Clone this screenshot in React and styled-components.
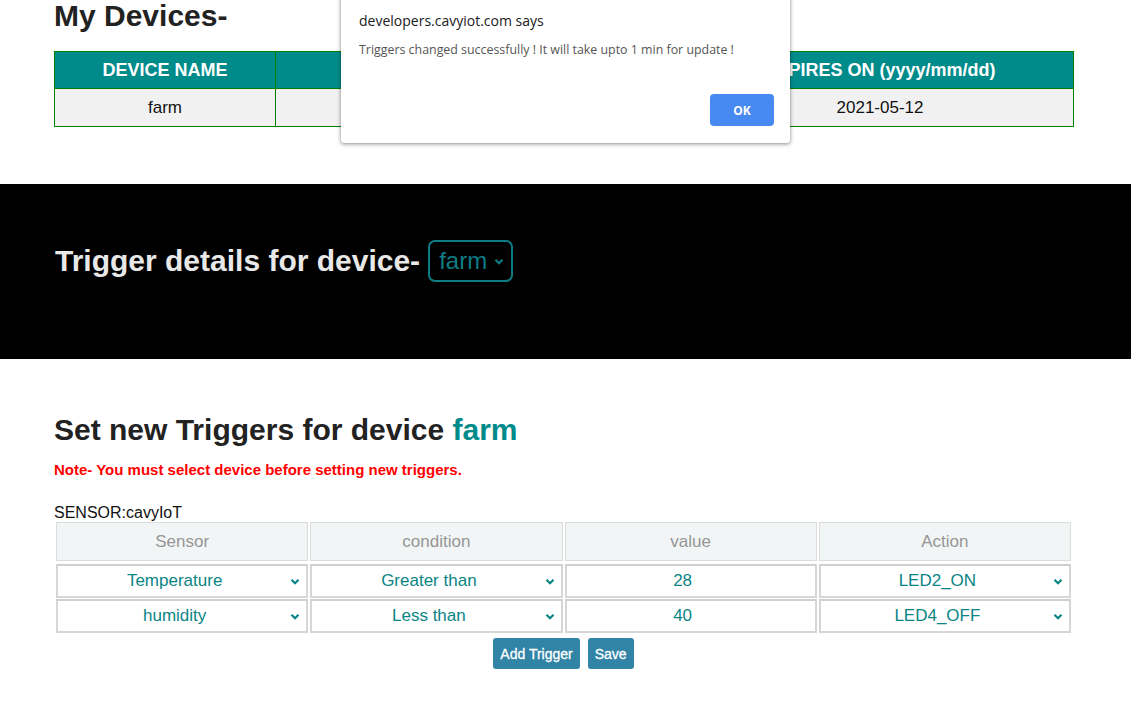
import React from "react";
import styled, { createGlobalStyle } from "styled-components";

const GlobalStyle = createGlobalStyle`
   html, body {
      margin: 0;
      padding: 0;
      background: #ffffff;
      font-family: "Liberation Sans", Arial, sans-serif;
   }
   * {
      box-sizing: border-box;
   }
`;

const Page = styled("div")`
   position: relative;
   width: 1131px;
   min-height: 726px;
   overflow: hidden;
`;

const Section = styled("section")`
   padding: ${(p) => p.pad || "0 57px 0 54px"};
   margin-top: ${(p) => p.top || 0}px;
   background: ${(p) => (p.dark ? "#000000" : "transparent")};
`;

const Heading = styled("h1")`
   margin: 0;
   font-size: 30px;
   line-height: 32px;
   font-weight: bold;
   color: ${(p) => p.color || "#222222"};
`;

const HeadingRow = styled(Heading)`
   display: flex;
   align-items: center;
   gap: 8px;
`;

const Teal = styled("span")`
   color: #008b8b;
`;

const DeviceTable = styled("table")`
   width: 100%;
   margin-top: 19px;
   border-collapse: collapse;
   border: 1px solid #008000;
   th,
   td {
      border: 1px solid #008000;
      text-align: center;
      height: 38px;
      padding: 0;
   }
   th {
      height: 37px;
      background: #008b8b;
      color: #ffffff;
      font-size: 18px;
      font-weight: bold;
   }
   td {
      background: #f1f1f1;
      color: #111111;
      font-size: 17px;
   }
`;

const DeviceSelect = styled("div")`
   display: flex;
   align-items: center;
   gap: 7px;
   height: 42px;
   padding: 0 7px 0 9px;
   border: 2px solid #0e7c84;
   border-radius: 7px;
   color: #0e7c84;
   font-size: 24px;
   font-weight: normal;
`;

const Note = styled("p")`
   margin: 15px 0 0;
   color: #ff0000;
   font-size: 15px;
   font-weight: bold;
`;

const SensorLabel = styled("div")`
   margin-top: 26px;
   font-size: 16px;
   color: #111111;
   line-height: 18px;
`;

const TriggerGrid = styled("div")`
   display: grid;
   grid-template-columns: repeat(4, 1fr);
   gap: 1px 2px;
   padding: 0 2px;
`;

const HeadCell = styled("div")`
   height: 39px;
   margin-bottom: 2px;
   background: #f2f5f5;
   border: 1px solid #dcdcdc;
   color: #959595;
   font-size: 17px;
   display: flex;
   align-items: center;
   justify-content: center;
`;

const Control = styled("div")`
   height: 34px;
   border: 2px solid #d6d6d6;
   border-top-color: #cfcfcf;
   background: #ffffff;
   color: #0a8585;
   font-size: 17px;
   display: flex;
   align-items: center;
   gap: 3px;
   padding: ${(p) => (p.input ? "0 18px 0 2px" : "0 6px 0 4px")};
`;

const ControlText = styled("span")`
   flex: 1;
   text-align: center;
`;

const Chevron = styled("svg")`
   flex-shrink: 0;
`;

const ButtonRow = styled("div")`
   display: flex;
   justify-content: center;
   gap: 8px;
   margin-top: 5px;
`;

const ActionButton = styled("button")`
   height: 31px;
   padding: 0 7px;
   border: none;
   border-radius: 3px;
   background: #3184a6;
   color: #ffffff;
   font-family: "Liberation Sans", Arial, sans-serif;
   font-size: 14px;
   font-weight: normal;
   -webkit-text-stroke: 0.3px #ffffff;
`;

const Dialog = styled("div")`
   position: absolute;
   left: 341px;
   top: -8px;
   width: 449px;
   height: 151px;
   background: #ffffff;
   border-radius: 0 0 3px 3px;
   box-shadow: 0 1px 4px rgba(0, 0, 0, 0.45), 0 0 1px rgba(0, 0, 0, 0.3);
   padding: 19px 16px 0 18px;
   font-family: "Open Sans", "Noto Sans", sans-serif;
   display: flex;
   flex-direction: column;
`;

const DialogTitle = styled("div")`
   font-size: 14px;
   color: #202020;
`;

const DialogText = styled("div")`
   margin-top: 11px;
   font-size: 12.4px;
   color: #555555;
`;

const DialogFooter = styled("div")`
   display: flex;
   justify-content: flex-end;
   margin-top: 36px;
`;

const OkButton = styled("button")`
   width: 64px;
   height: 32px;
   border: none;
   border-radius: 4px;
   background: #4689f0;
   color: #ffffff;
   font-family: "Open Sans", "Noto Sans", sans-serif;
   font-size: 12px;
   font-weight: bold;
`;

const ChevronIcon = ({ w = 10, h = 7 }) => (
   <Chevron viewBox="0 0 10 7" width={w} height={h}>
      <path d="M1.5 1.8 L5 5.2 L8.5 1.8" fill="none" stroke="currentColor" strokeWidth="2.2" />
   </Chevron>
);

const rows = [
   { sensor: "Temperature", condition: "Greater than", value: "28", action: "LED2_ON" },
   { sensor: "humidity", condition: "Less than", value: "40", action: "LED4_OFF" },
];

const App = () => {
   return (
      <>
         <GlobalStyle />
         <Page>
            <Section>
               <Heading>My Devices-</Heading>
               <DeviceTable>
                  <colgroup>
                     <col style={{ width: 221 }} />
                     <col style={{ width: 411 }} />
                     <col />
                  </colgroup>
                  <thead>
                     <tr>
                        <th>DEVICE NAME</th>
                        <th>DEVICE ID</th>
                        <th>EXPIRES ON (yyyy/mm/dd)</th>
                     </tr>
                  </thead>
                  <tbody>
                     <tr>
                        <td>farm</td>
                        <td></td>
                        <td>2021-05-12</td>
                     </tr>
                  </tbody>
               </DeviceTable>
            </Section>

            <Section dark top={57} pad="56px 57px 77px 55px">
               <HeadingRow color="#e8e8e8">
                  Trigger details for device-
                  <DeviceSelect>
                     farm
                     <ChevronIcon w={10} h={7} />
                  </DeviceSelect>
               </HeadingRow>
            </Section>

            <Section pad="55px 58px 40px 54px">
               <Heading>
                  Set new Triggers for device <Teal>farm</Teal>
               </Heading>
               <Note>Note- You must select device before setting new triggers.</Note>
               <SensorLabel>SENSOR:cavyIoT</SensorLabel>
               <TriggerGrid>
                  <HeadCell>Sensor</HeadCell>
                  <HeadCell>condition</HeadCell>
                  <HeadCell>value</HeadCell>
                  <HeadCell>Action</HeadCell>
                  {rows.map((r) => (
                     <React.Fragment key={r.sensor}>
                        <Control>
                           <ControlText>{r.sensor}</ControlText>
                           <ChevronIcon />
                        </Control>
                        <Control>
                           <ControlText>{r.condition}</ControlText>
                           <ChevronIcon />
                        </Control>
                        <Control input>
                           <ControlText>{r.value}</ControlText>
                        </Control>
                        <Control>
                           <ControlText>{r.action}</ControlText>
                           <ChevronIcon />
                        </Control>
                     </React.Fragment>
                  ))}
               </TriggerGrid>
               <ButtonRow>
                  <ActionButton>Add Trigger</ActionButton>
                  <ActionButton>Save</ActionButton>
               </ButtonRow>
            </Section>

            <Dialog>
               <DialogTitle>developers.cavyiot.com says</DialogTitle>
               <DialogText>
                  Triggers changed successfully ! It will take upto 1 min for update !
               </DialogText>
               <DialogFooter>
                  <OkButton>OK</OkButton>
               </DialogFooter>
            </Dialog>
         </Page>
      </>
   );
};

export default App;
